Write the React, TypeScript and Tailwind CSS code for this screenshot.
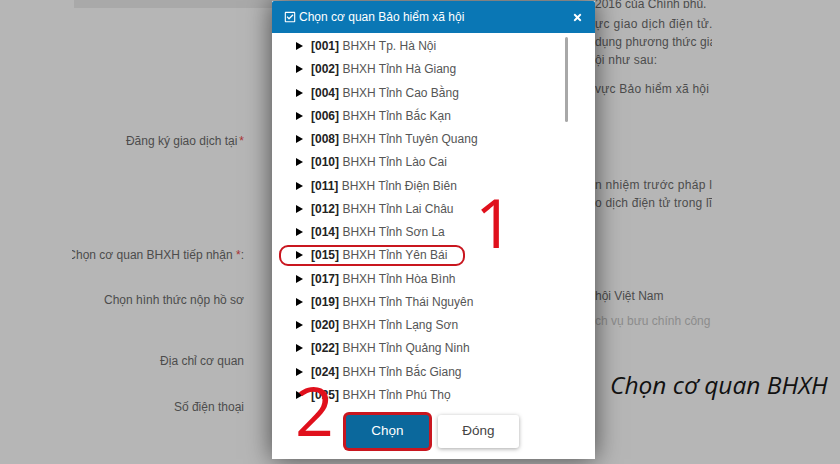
import { FaRegCheckSquare, FaTimes } from "react-icons/fa";

const agencies = [
  { code: "001", name: "BHXH Tp. Hà Nội" },
  { code: "002", name: "BHXH Tỉnh Hà Giang" },
  { code: "004", name: "BHXH Tỉnh Cao Bằng" },
  { code: "006", name: "BHXH Tỉnh Bắc Kạn" },
  { code: "008", name: "BHXH Tỉnh Tuyên Quang" },
  { code: "010", name: "BHXH Tỉnh Lào Cai" },
  { code: "011", name: "BHXH Tỉnh Điện Biên" },
  { code: "012", name: "BHXH Tỉnh Lai Châu" },
  { code: "014", name: "BHXH Tỉnh Sơn La" },
  { code: "015", name: "BHXH Tỉnh Yên Bái" },
  { code: "017", name: "BHXH Tỉnh Hòa Bình" },
  { code: "019", name: "BHXH Tỉnh Thái Nguyên" },
  { code: "020", name: "BHXH Tỉnh Lạng Sơn" },
  { code: "022", name: "BHXH Tỉnh Quảng Ninh" },
  { code: "024", name: "BHXH Tỉnh Bắc Giang" },
  { code: "025", name: "BHXH Tỉnh Phú Thọ" },
];

const AgencyRow = ({ code, name }: { code: string; name: string }) => {
  return (
    <li className="relative flex h-[23.25px] items-center">
      {/* Triangle */}
      <span className="ml-[24px] h-0 w-0 border-y-[4px] border-l-[7px] border-y-transparent border-l-black"></span>
      <span className="ml-[8px] text-[12px] text-[#555]">
        <b className="text-[#222]">[{code}]</b> {name}
      </span>
      {code === "015" && (
        <span className="absolute left-[7px] top-[1px] h-[21px] w-[186px] rounded-[9px] border-[2.5px] border-[#c9161f]"></span>
      )}
    </li>
  );
};

const LeftPanel = () => {
  return (
    <div className="flex h-full w-[272px] shrink-0 flex-col items-end pr-[28px] text-[12px] text-[#4c4c4c]">
      <div className="-mr-[28px] h-[8px] w-[198px] bg-[#a9a9a9]"></div>
      <div className="mt-[125px] h-[16px] leading-[16px]">
        Đăng ký giao dịch tại<span className="ml-[2px] text-[#a33]">*</span>
      </div>
      <div className="mt-[98px] flex h-[16px] w-[172px] justify-end overflow-hidden whitespace-nowrap leading-[16px]">
        <span className="shrink-0">
          Chọn cơ quan BHXH tiếp nhận<span className="text-[#a33]"> *</span>:
        </span>
      </div>
      <div className="mt-[29px] h-[16px] leading-[16px]">Chọn hình thức nộp hồ sơ</div>
      <div className="mt-[45px] h-[16px] leading-[16px]">Địa chỉ cơ quan</div>
      <div className="mt-[30px] h-[16px] leading-[16px]">Số điện thoại</div>
    </div>
  );
};

const RightPanel = () => {
  return (
    <div className="h-full w-[117px] shrink-0 overflow-hidden whitespace-nowrap text-[12px] leading-[18px] text-[#4c4c4c]">
      <div className="h-[8px] overflow-hidden leading-[8px]">2016 của Chính phủ,</div>
      <div className="mt-[7px] tracking-[0.4px]">ực giao dịch điện tử. C</div>
      <div className="tracking-[0.1px]">dụng phương thức gia</div>
      <div className="tracking-[0.2px]">ội như sau:</div>
      <div className="mt-[11px] tracking-[0.25px]">vực Bảo hiểm xã hội</div>
      <div className="mt-[78px] tracking-[0.3px]">n nhiệm trước pháp l</div>
      <div className="tracking-[0.2px]">o dịch điện tử trong lĩ</div>
      <div className="mt-[75px]">hội Việt Nam</div>
      <div className="mt-[7px] text-[#8c8c8c]">ch vụ bưu chính công</div>
    </div>
  );
};

export default function App() {
  return (
    <div className="relative flex h-[464px] w-[840px] overflow-hidden bg-[#b6b6b6] font-['Liberation_Sans',Arial,sans-serif]">
      <LeftPanel />

      {/* Modal */}
      <div className="relative z-10 mt-[1px] flex h-[458px] w-[323px] shrink-0 flex-col bg-white shadow-[0_0_24px_rgba(0,0,0,0.6)]">
        <div className="flex h-[32px] items-center rounded-t-[2px] bg-[#0a77b5] pl-[12px] pr-[12px] text-[12px] text-white">
          <FaRegCheckSquare className="mr-[3px] text-[12px]" />
          <span>Chọn cơ quan Bảo hiểm xã hội</span>
          <FaTimes className="ml-auto text-[11px]" />
        </div>

        <div className="relative flex-1">
          <ul className="pt-[1.5px]">
            {agencies.map((a) => (
              <AgencyRow key={a.code} code={a.code} name={a.name} />
            ))}
          </ul>
          {/* Scrollbar */}
          <div className="absolute left-[293px] top-[4px] h-[85px] w-[3px] rounded-full bg-[#a8a8a8]"></div>
        </div>

        {/* Footer */}
        <div className="flex h-[44px] items-start pl-[74px]">
          <button className="h-[33px] w-[83px] rounded-[3px] bg-[#0b689c] text-[13.5px] text-white shadow-sm ring-[3px] ring-[#c9161f]">
            Chọn
          </button>
          <button className="ml-[9px] h-[33px] w-[81px] rounded-[3px] bg-white text-[13.5px] text-[#444] shadow-[0_1px_4px_rgba(0,0,0,0.35)]">
            Đóng
          </button>
        </div>
      </div>

      <RightPanel />

      {/* Annotations */}
      <span className="absolute left-[475px] top-[176px] z-20 font-['Open_Sans',sans-serif] text-[68px] leading-[92px] font-medium text-[#e0101c]">1</span>
      <span className="absolute left-[295px] top-[364px] z-20 font-['Open_Sans',sans-serif] text-[68px] leading-[92px] font-medium text-[#e0101c]">2</span>
      <span className="absolute left-[610px] top-[369px] z-20 font-['Open_Sans',sans-serif] text-[24.5px] leading-[32px] italic text-[#111]">
        Chọn cơ quan BHXH
      </span>
    </div>
  );
}
